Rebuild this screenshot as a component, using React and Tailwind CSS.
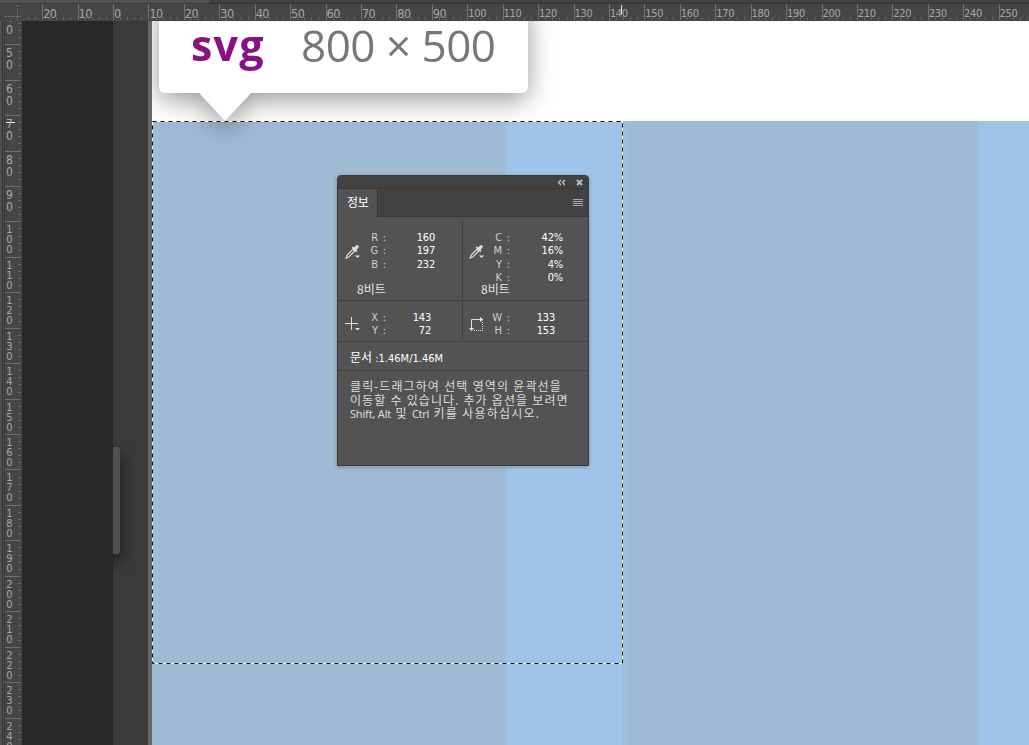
import React from "react";

const UNIT = 35.43;

const topLabels = [30, 20, 10, 0, ...Array.from({ length: 25 }, (_, i) => (i + 1) * 10)];
const leftLabels = Array.from({ length: 21 }, (_, i) => (i + 4) * 10);

const TOP_START = 113 - 3 * UNIT;
const LEFT_UNIT = 35.44;
const LEFT_START = 44.2 - LEFT_UNIT;

function TopRuler() {
  const ticks = [];
  for (let i = 0; i < topLabels.length * 5; i++) {
    const x = Math.round(TOP_START + (i * UNIT) / 5);
    if (x < 22) continue;
    const major = i % 5 === 0;
    ticks.push(<rect key={i} x={x} y={major ? 4 : 17} width="1" height={major ? 16 : 3} fill={major ? "#707070" : "#666666"} />);
  }
  return (
    <div className="relative h-[17px] w-full overflow-hidden bg-[#464646]">
      <svg className="absolute left-0 -top-1" width="1029" height="21">{ticks}</svg>
      <div className="relative flex" style={{ marginLeft: TOP_START }}>
        {topLabels.map((n, i) => (
          <div key={i} className="flex h-[17px] w-[35.43px] shrink-0 items-start pl-[1px] pt-[3px] text-[#a6a6a6]">
            {i === 0 ? null : n < 100 ? (
              <span className="text-[12.5px] leading-[14px] tracking-[-0.5px]">{n}</span>
            ) : (
              <span className="text-[11px] leading-[13px] tracking-[-0.3px]">{n}</span>
            )}
          </div>
        ))}
      </div>
      <div className="absolute left-0 top-0 h-[17px] w-[21px] bg-[#464646]">
        <div className="absolute left-[17px] top-[1px] h-4 border-l border-dotted border-[#777]" />
        <div className="absolute left-[5px] top-[12px] w-4 border-t border-dotted border-[#777]" />
      </div>
      <div className="absolute left-[621px] top-[1px] h-[9px] w-px bg-[#e8e8e8]" />
    </div>
  );
}

function LeftRuler() {
  const ticks = [];
  for (let i = 0; i < leftLabels.length * 5; i++) {
    const y = Math.round(LEFT_START + (i * LEFT_UNIT) / 5);
    if (y < 21) continue;
    const major = i % 5 === 0;
    ticks.push(<rect key={i} x={major ? 5 : 18} y={y - 21} width={major ? 16 : 3} height="1" fill={major ? "#707070" : "#666666"} />);
  }
  return (
    <div className="relative w-[22px] shrink-0 overflow-hidden bg-[#464646]">
      <svg className="absolute left-0 top-0" width="22" height="724">
        <rect width="5" height="724" fill="#4f4f4f" />
        <rect x="2" width="1" height="724" fill="#333" />
        <rect x="4" width="1" height="724" fill="#383838" />
        {ticks}
      </svg>
      <div className="relative" style={{ marginTop: LEFT_START - 21 }}>
        {leftLabels.map((n) => (
          <div key={n} className="flex h-[35.44px] w-[14px] flex-col items-center pl-[5px] pt-[3px] text-[#a6a6a6]">
            {String(n).split("").map((d, i) =>
              n < 100 ? (
                <span key={i} className="block h-3 text-[12px] leading-[12px]">{d}</span>
              ) : (
                <span key={i} className="block h-[10px] text-[11px] leading-[11px]">{d}</span>
              )
            )}
          </div>
        ))}
      </div>
      <div className="absolute left-[6px] top-[101px] h-px w-[9px] bg-[#e8e8e8]" />
    </div>
  );
}

function Tooltip() {
  return (
    <div className="absolute -top-5 left-[7px] h-[92px] w-[369px] rounded-[6px] bg-white [filter:drop-shadow(0_7px_13px_rgba(0,0,0,0.4))]">
      <div className="flex pl-[32px] pt-[24px] font-['Open_Sans',sans-serif] text-[44px] leading-[40px]">
        <span className="w-[110px] text-[43px] font-bold tracking-[1.2px] text-[#881280]">svg</span>
        <span className="whitespace-nowrap tracking-[-0.5px] text-[#777]">800 × 500</span>
      </div>
      <svg className="absolute left-[39px] top-[91px]" width="56" height="30">
        <path d="M0 0H54L27 29Z" fill="white" />
      </svg>
    </div>
  );
}

function Eyedropper() {
  return (
    <svg width="16" height="16" viewBox="0 0 16 16">
      <path d="M1.2 14L2 11.4L8 5.2L9.8 7L3.7 13.1L1.2 14Z" fill="none" stroke="#dedede" strokeWidth="1.2" />
      <path d="M6.6 3.6L8 2.6L9.2 3.4L11 1.5Q12.3 0.6 13.4 1.7Q14.3 2.8 13.3 4L11.5 5.7L12.4 7L11.2 8.2Z" fill="#dedede" />
      <path d="M10 11.5H15L12.5 14Z" fill="#dedede" />
    </svg>
  );
}

function Reading({ rows, labelClass, valueClass }) {
  return (
    <div className="flex">
      <div className={labelClass}>
        {rows.map(([k]) => (
          <div key={k} className="flex justify-end gap-[5px] text-[#cfcfcf]"><span>{k}</span><span>:</span></div>
        ))}
      </div>
      <div className={valueClass}>
        {rows.map(([k, v]) => <div key={k} className="text-right text-white">{v}</div>)}
      </div>
    </div>
  );
}

function InfoPanel() {
  return (
    <div className="absolute left-[337px] top-[175px] flex h-[291px] w-[252px] flex-col overflow-hidden rounded-t-[4px] border border-[#383838] bg-[#535353] font-['DejaVu_Sans_Condensed','DejaVu_Sans','Noto_Sans_CJK_KR',sans-serif] text-[11px] tracking-[-0.2px] shadow-[0_1px_4px_rgba(0,0,0,0.25)]">
      <div className="flex h-[13px] shrink-0 items-center justify-end gap-[11px] border-b border-[#383838] bg-[#424242] pr-[5px]">
        <svg width="8" height="7" viewBox="0 0 8 7"><path d="M4 1L1.5 3.5L4 6M8 1L5.5 3.5L8 6" fill="none" stroke="#ccc" strokeWidth="1.3" /></svg>
        <svg width="7" height="7" viewBox="0 0 7 7"><path d="M1 1L6 6M6 1L1 6" stroke="#bbb" strokeWidth="2" /></svg>
      </div>
      <div className="flex h-[28px] shrink-0 bg-[#424242]">
        <div className="w-[40px] border-r border-[#383838] bg-[#535353] pl-[9px] font-['Noto_Sans_CJK_KR'] text-[12px] leading-[25px] tracking-[-0.3px] text-white">정보</div>
        <div className="flex flex-1 justify-end border-b border-[#383838] pr-[5px] pt-[10px]">
          <svg width="10" height="8"><path d="M0 .5H10M0 2.5H10M0 4.5H10M0 6.5H10" stroke="#aaa" /></svg>
        </div>
      </div>
      <div className="mx-px flex h-[84px] shrink-0 border-b border-[#424242] pt-[3px]">
        <div className="w-[124px] border-r border-[#424242] pt-[11px]">
          <div className="flex h-[51px]">
            <div className="w-[26px] pl-[6px] pt-[13px]"><Eyedropper /></div>
            <div className="leading-[13.4px]"><Reading rows={[["R", "160"], ["G", "197"], ["B", "232"]]} labelClass="w-[21px]" valueClass="w-[49px]" /></div>
          </div>
          <div className="pl-[18px] font-['Noto_Sans_CJK_KR'] text-[12px] leading-[13px] tracking-[0px] text-[#e4e4e4]">8비트</div>
        </div>
        <div className="flex-1 pt-[11px]">
          <div className="flex h-[51px]">
            <div className="w-[26px] pl-[6px] pt-[13px]"><Eyedropper /></div>
            <div className="leading-[13.4px]"><Reading rows={[["C", "42%"], ["M", "16%"], ["Y", "4%"], ["K", "0%"]]} labelClass="w-[21px]" valueClass="w-[53px]" /></div>
          </div>
          <div className="pl-[18px] font-['Noto_Sans_CJK_KR'] text-[12px] leading-[13px] tracking-[0px] text-[#e4e4e4]">8비트</div>
        </div>
      </div>
      <div className="flex h-[41px] shrink-0 border-b border-[#424242] leading-[13px]">
        <div className="flex w-[125px] border-r border-[#424242] pt-[10px]">
          <svg className="ml-[7px] mt-[6px] shrink-0" width="16" height="16"><path d="M6.5 0V13M0 6.5H13" stroke="#dedede" /><path d="M10 11H15L12.5 13.5Z" fill="#dedede" /></svg>
          <Reading rows={[["X", "143"], ["Y", "72"]]} labelClass="w-[25px]" valueClass="w-[45px]" />
        </div>
        <div className="flex flex-1 pt-[10px]">
          <svg className="ml-[6px] mt-[6px] shrink-0" width="16" height="16"><path d="M2.5 13V2.5H12" fill="none" stroke="#dedede" /><path d="M11 0L14.5 2.5L11 5ZM0 11H5L2.5 14Z" fill="#dedede" /><path d="M13.5 5V14M5 13.5H14" stroke="#dedede" strokeDasharray="1 1" /></svg>
          <Reading rows={[["W", "133"], ["H", "153"]]} labelClass="w-[25px]" valueClass="w-[45px]" />
        </div>
      </div>
      <div className="h-[29px] shrink-0 border-b border-[#424242] pl-3 pt-px leading-[31px] tracking-[0px] text-white"><span className="text-[12px]">문서</span> :1.46M/1.46M</div>
      <div className="whitespace-nowrap pl-3 pt-[9px] font-['Noto_Sans','Noto_Sans_CJK_KR',sans-serif] text-[12px] leading-[14px] text-[#dcdcdc]">
        <div className="tracking-[1.1px]">클릭-드래그하여 선택 영역의 윤곽선을</div>
        <div className="tracking-[1.05px]">이동할 수 있습니다. 추가 옵션을 보려면</div>
        <div className="-mt-px tracking-[1.2px]">
          <span className="text-[11px] tracking-[-0.2px]">Shift, Alt</span> 및 <span className="text-[11px] tracking-[-0.3px]">Ctrl</span> 키를 사용하십시오.
        </div>
      </div>
    </div>
  );
}

export default function App() {
  return (
    <div className="relative flex h-[745px] w-[1029px] flex-col overflow-hidden bg-[#282828] font-['DejaVu_Sans_Condensed','DejaVu_Sans',sans-serif]">
      <div className="flex h-1 shrink-0 border-b border-[#383838] bg-[#424242]"><div className="w-[209px] bg-[#535353]" /></div>
      <TopRuler />
      <div className="flex min-h-0 flex-1">
        <LeftRuler />
        <div className="w-[91px] bg-[#282828]" />
        <div className="relative w-[35px] overflow-hidden bg-[#3b3b3b]">
          <div className="absolute -left-4 top-[426px] h-[107px] w-[23px] rounded-[3px] bg-[#505050] shadow-[0_7px_18px_rgba(0,0,0,0.6)]" />
        </div>
        <div className="w-1 bg-[#666]" />
        <div className="relative flex-1 overflow-hidden bg-white pt-[100px]">
          <div className="flex h-full">
            <div className="w-[354px] bg-[#9fbad3]" />
            <div className="w-[117px] bg-[#a0c4e9]" />
            <div className="w-[4px] bg-[#9dbdd9]" />
            <div className="w-[351px] bg-[#9fbad3]" />
            <div className="flex-1 bg-[#a0c4e9]" />
          </div>
          <Tooltip />
          <svg className="absolute left-0 top-[100px]" width="472" height="544">
            <rect x=".5" y=".5" width="470" height="542" fill="none" stroke="white" />
            <rect x=".5" y=".5" width="470" height="542" fill="none" stroke="black" strokeDasharray="4 4" />
          </svg>
        </div>
      </div>
      <InfoPanel />
    </div>
  );
}
